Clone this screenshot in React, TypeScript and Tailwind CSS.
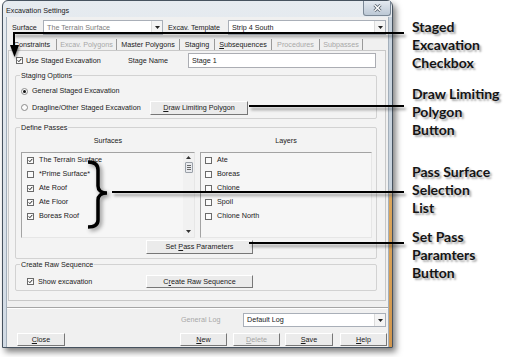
import React from 'react'

function Box({ on }: { on?: boolean }) {
  return (
    <svg width="7" height="7" viewBox="0 0 7 7" className="shrink-0">
      <rect x="0.5" y="0.5" width="6" height="6" fill="#fbfbfb" stroke="#6a6a6a" />
      {on && <path d="M1.7 3.4 L2.9 4.7 L5.3 1.9" fill="none" stroke="#222" strokeWidth="1" />}
    </svg>
  )
}

function Radio({ on }: { on?: boolean }) {
  return (
    <svg width="7" height="7" viewBox="0 0 7 7" className="shrink-0">
      <circle cx="3.5" cy="3.5" r="3" fill="#fbfbfb" stroke="#8b8b8b" />
      {on && <circle cx="3.5" cy="3.5" r="1.5" fill="#111" />}
    </svg>
  )
}

function Arrow() {
  return (
    <div className="flex h-full w-[11px] items-center justify-center border-l border-[#dcdcdc] bg-[#f4f4f4]">
      <svg width="5" height="3" viewBox="0 0 5 3"><path d="M0 0 H5 L2.5 3 Z" fill="#222" /></svg>
    </div>
  )
}

function Combo({ text, className, muted }: { text: string; className: string; muted?: boolean }) {
  return (
    <div className={`flex items-center border border-[#a9afb8] bg-white ${className}`}>
      <span className={`flex-1 pl-[3px] ${muted ? 'text-[#7b7b7b]' : 'text-[#1a1a1a]'}`}>{text}</span>
      <Arrow />
    </div>
  )
}

function Btn({ children, className, dim }: { children: React.ReactNode; className: string; dim?: boolean }) {
  return (
    <div className={`flex items-center justify-center border border-b-[#777] border-l-white border-r-[#777] border-t-white bg-[#ebebeb] ${dim ? 'text-[#a5a5a5]' : ''} ${className}`}>
      <span>{children}</span>
    </div>
  )
}

function Group({ title, className, children }: { title: string; className: string; children: React.ReactNode }) {
  return (
    <div className={`relative ml-[6px] w-[362px] rounded-[2px] border border-[#d2d2d2] ${className}`}>
      <span className="absolute -top-[4px] left-[4px] bg-[#f3f3f3] px-[1px]">{title}</span>
      {children}
    </div>
  )
}

const tabs = [
  { label: 'Constraints', w: 'w-[49px]' },
  { label: 'Excav. Polygons', w: 'w-[60px]', dim: true },
  { label: 'Master Polygons', w: 'w-[63px]' },
  { label: 'Staging', w: 'w-[35px]' },
  { label: 'Subsequences', w: 'w-[57px]', u: true },
  { label: 'Procedures', w: 'w-[48px]', dim: true },
  { label: 'Subpasses', w: 'w-[43px]', dim: true },
]

const surfaces = [
  { name: 'The Terrain Surface', on: true },
  { name: '*Prime Surface*', on: false },
  { name: 'Ate Roof', on: true },
  { name: 'Ate Floor', on: true },
  { name: 'Boreas Roof', on: true },
]

const layers = ['Ate', 'Boreas', 'Chione', 'Spoil', 'Chione North']

function ListBox({ className, children }: { className: string; children: React.ReactNode }) {
  return (
    <div className={`flex h-[86px] border border-b-[#e6e6e6] border-l-[#a3a3a3] border-r-[#e6e6e6] border-t-[#a3a3a3] bg-[#f6f6f6] ${className}`}>
      {children}
    </div>
  )
}

function Client() {
  return (
    <div className="flex w-[381px] flex-col bg-[#f0f0f0]">
      {/* top combos */}
      <div className="mt-[3px] flex h-[15px] items-center pl-[5px]">
        <span className="w-[31px]">Surface</span>
        <Combo text="The Terrain Surface" className="h-[15px] w-[120px]" muted />
        <span className="ml-[5px] w-[60px]">Excav. Template</span>
        <Combo text="Strip 4 South" className="h-[15px] w-[158px]" />
      </div>

      {/* tabs */}
      <div className="ml-[1px] mt-[2px] flex h-[13px] items-end">
        {tabs.map(t => (
          <div key={t.label} className={`flex h-[11px] items-center justify-center border-r border-[#9a9a9a] ${t.w} ${t.dim ? 'text-[#a8a8a8]' : ''}`}>
            {t.u ? <span><u>S</u>ubsequences</span> : t.label}
          </div>
        ))}
      </div>

      <div className="ml-[1px] h-[251px] w-[378px] border border-[#c8c8c8] bg-[#f3f3f3]">
        <div className="mt-[2px] flex h-[15px] items-center">
          <div className="flex w-[119px] items-center pl-[7px]">
            <Box on />
            <span className="ml-[3px]">Use Staged Excavation</span>
          </div>
          <span className="w-[60px]">Stage Name</span>
          <div className="flex h-[15px] w-[188px] items-center border border-[#abadb3] bg-white pl-[3px]">Stage 1</div>
        </div>

        <Group title="Staging Options" className="mt-[7px] h-[44px]">
          <div className="mt-[10px] flex h-[10px] items-center pl-[5px]">
            <Radio on />
            <span className="ml-[4px]">General Staged Excavation</span>
          </div>
          <div className="mt-[5px] flex h-[14px] items-center">
            <div className="flex w-[134px] items-center pl-[5px]">
              <Radio />
              <span className="ml-[4px]">Dragline/Other Staged Excavation</span>
            </div>
            <Btn className="h-[14px] w-[98px]"><u>D</u>raw Limiting Polygon</Btn>
          </div>
        </Group>

        <Group title="Define Passes" className="mt-[8px] h-[132px]">
          <div className="mt-[8px] flex h-[10px] items-center pl-[5px]">
            <span className="w-[174px] text-center">Surfaces</span>
            <span className="ml-[5px] w-[172px] text-center">Layers</span>
          </div>
          <div className="mt-[6px] flex pl-[5px]">
            <ListBox className="w-[174px]">
              <div className="flex flex-1 flex-col">
                {surfaces.map(s => (
                  <div key={s.name} className="flex h-[14px] items-center pl-[5px]">
                    <Box on={s.on} />
                    <span className="ml-[5px]">{s.name}</span>
                  </div>
                ))}
              </div>
              <div className="flex w-[11px] flex-col items-center bg-[#f1f1f1]">
                <svg width="5" height="3" viewBox="0 0 5 3" className="mt-[3px]"><path d="M0 3 H5 L2.5 0 Z" fill="#333" /></svg>
                <div className="mt-[3px] flex h-[11px] w-[8px] flex-col items-center justify-center gap-[1px] rounded-[1px] border border-[#9aa0a8] bg-[#e8eaee]">
                  <div className="h-px w-[4px] bg-[#666]" />
                  <div className="h-px w-[4px] bg-[#666]" />
                  <div className="h-px w-[4px] bg-[#666]" />
                </div>
                <svg width="5" height="3" viewBox="0 0 5 3" className="mb-[4px] mt-auto"><path d="M0 0 H5 L2.5 3 Z" fill="#333" /></svg>
              </div>
            </ListBox>
            <ListBox className="ml-[5px] w-[172px]">
              <div className="flex flex-1 flex-col">
                {layers.map(l => (
                  <div key={l} className="flex h-[14px] items-center pl-[4px]">
                    <Box />
                    <span className="ml-[5px]">{l}</span>
                  </div>
                ))}
              </div>
            </ListBox>
          </div>
          <Btn className="ml-[130px] mt-[2px] h-[14px] w-[107px]">Set <u>P</u>ass Parameters</Btn>
        </Group>

        <Group title="Create Raw Sequence" className="mt-[5px] h-[27px]">
          <div className="mt-[10px] flex h-[13px] items-center">
            <div className="flex w-[130px] items-center pl-[11px]">
              <Box on />
              <span className="ml-[4px]">Show excavation</span>
            </div>
            <Btn className="h-[13px] w-[107px]">C<u>r</u>eate Raw Sequence</Btn>
          </div>
        </Group>
      </div>

      <div className="mt-[6px] h-[2px] border-t border-[#a6a6a6] bg-white" />

      <div className="mt-[4px] flex h-[14px] items-center">
        <span className="ml-[174px] w-[62px] text-[#a8a8a8]">General Log</span>
        <Combo text="Default Log" className="h-[14px] w-[143px]" />
      </div>

      <div className="mt-[6px] flex h-[13px]">
        <Btn className="ml-[10px] w-[48px]"><u>C</u>lose</Btn>
        <Btn className="ml-[115px] w-[47px]"><u>N</u>ew</Btn>
        <Btn className="ml-[6px] w-[47px]" dim><u>D</u>elete</Btn>
        <Btn className="ml-[5px] w-[48px]"><u>S</u>ave</Btn>
        <Btn className="ml-[7px] w-[47px]"><u>H</u>elp</Btn>
      </div>
    </div>
  )
}

function Dialog() {
  return (
    <div className="ml-[2px] flex h-[348px] w-[391px] shrink-0 flex-col rounded-t-[6px] border border-[#46525f] bg-[linear-gradient(to_bottom,#e6ebf0,#d1dae4)] shadow-[3px_4px_6px_rgba(0,0,0,0.5)]">
      <div className="flex h-[16px] items-start">
        <span className="ml-[3px] mt-[6px]">Excavation Settings</span>
        <div className="ml-auto mr-[1px] flex h-[15px] w-[28px] items-center justify-center rounded-b-[3px] border border-t-0 border-[#7b8896] bg-[linear-gradient(to_bottom,#e3e9f0,#bcc8d5)]">
          <svg width="9" height="8" viewBox="0 0 9 8">
            <path d="M1.5 1 L7.5 7 M7.5 1 L1.5 7" stroke="#55606c" strokeWidth="3" />
            <path d="M1.5 1 L7.5 7 M7.5 1 L1.5 7" stroke="#fff" strokeWidth="1.4" />
          </svg>
        </div>
      </div>
      <div className="flex h-[330px]">
        <div className="w-[4px] border-r border-[#a3afbb]" />
        <Client />
        <div className="w-[4px] border-l border-[#a3afbb] bg-[linear-gradient(to_bottom,#c8d3de_0%,#c8d3de_52%,#dba65c_55%,#d2974e_100%)]" />
      </div>
    </div>
  )
}

const notes = [
  { lines: ['Staged', 'Excavation', 'Checkbox'], mt: 'mt-[18px]' },
  { lines: ['Draw Limiting', 'Polygon', 'Button'], mt: 'mt-[13px]' },
  { lines: ['Pass Surface', 'Selection', 'List'], mt: 'mt-[24px]' },
  { lines: ['Set Pass', 'Paramters', 'Button'], mt: 'mt-[11px]' },
]

function Notes() {
  return (
    <div className="ml-[19px] flex flex-col font-['Lato',sans-serif] text-[14px] font-bold leading-[18px] text-[#151515] [text-shadow:2px_2px_2px_rgba(0,0,0,0.35)]">
      {notes.map(n => (
        <div key={n.lines[0]} className={n.mt}>
          {n.lines.map(l => <div key={l}>{l}</div>)}
        </div>
      ))}
    </div>
  )
}

const line = 'absolute h-[2px] bg-black shadow-[2px_3px_3px_rgba(0,0,0,0.4)]'

function Pointers() {
  return (
    <>
      <div className={`${line} left-[13px] top-[32px] w-[391px]`} />
      <div className="absolute left-[13px] top-[32px] h-[14px] w-[2px] bg-black" />
      <svg className="absolute left-[10px] top-[45px] drop-shadow-[1px_2px_1px_rgba(0,0,0,0.4)]" width="9" height="12" viewBox="0 0 9 12">
        <path d="M0 0 H9 L4.5 12 Z" fill="#000" />
      </svg>
      <div className={`${line} left-[249px] top-[105px] w-[155px]`} />
      <svg className="absolute left-[84px] top-[158px] drop-shadow-[2px_2px_2px_rgba(0,0,0,0.45)]" width="28" height="76" viewBox="0 0 28 76">
        <path d="M4 4 C10 4 14 6 14 12 L14 28 C14 32 17 35 23 35 C17 35 14 38 14 42 L14 62 C14 67 10 69 4 69" fill="none" stroke="#000" strokeWidth="3.5" />
      </svg>
      <div className={`${line} left-[112px] top-[191px] w-[292px]`} />
      <div className={`${line} left-[249px] top-[242px] w-[155px]`} />
    </>
  )
}

export default function App() {
  return (
    <div className="relative h-[357px] w-[520px] overflow-hidden bg-white font-['Liberation_Sans',Arial,sans-serif] text-[7.2px] leading-none text-[#1a1a1a]">
      <div className="flex items-start">
        <Dialog />
        <Notes />
      </div>
      <Pointers />
    </div>
  )
}
